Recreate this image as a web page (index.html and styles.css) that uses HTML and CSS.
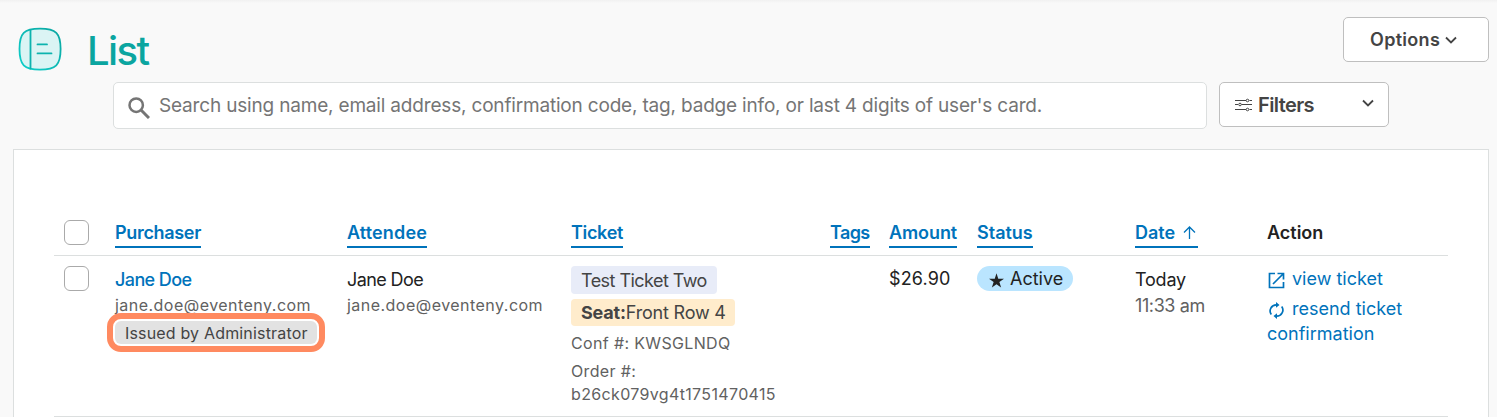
FILE: index.html
```html
<!DOCTYPE html>
<html lang="en">
<head>
    <meta charset="utf-8">
    <title>List</title>
    <link rel="stylesheet" href="styles.css">
</head>
<body>
    <header class="page-header">
        <svg class="page-icon" width="44" height="44" viewBox="0 0 44 44" fill="none" stroke-width="1.8" stroke-linecap="round">
            <defs>
                <linearGradient id="teal" x1="0" y1="1" x2="1" y2="0">
                    <stop offset="0" stop-color="#0fd0cb"/>
                    <stop offset="1" stop-color="#0ba5a0"/>
                </linearGradient>
            </defs>
            <path d="M22 1.700C38 1.700 42.600 6 42.600 22S38 42.600 22 42.600 1.500 38 1.500 22 6 1.700 22 1.700Z" fill="#dbf4f4" stroke="url(#teal)"/>
            <path d="M12.500 3v38.500" stroke="#0db3ae"/>
            <path d="M19.500 17.400h9.500M19.500 26.400h14" stroke="#0db3ae"/>
        </svg>
        <h1>List</h1>
        <button class="btn options">Options
            <svg width="12" height="8" viewBox="0 0 12 8"><path d="M1 1.500l5 5 5-5" fill="none" stroke="#444" stroke-width="1.800"/></svg>
        </button>
    </header>

    <div class="search-row">
        <div class="search-box">
            <svg width="22" height="22" viewBox="0 0 22 22" fill="none" stroke="#757575">
                <circle cx="8.200" cy="8.200" r="6.700" stroke-width="2.500"/>
                <path d="M13 13l8 8" stroke-width="3"/>
            </svg>
            <input type="text" placeholder="Search using name, email address, confirmation code, tag, badge info, or last 4 digits of user's card.">
        </div>
        <button class="btn filters">
            <svg width="17" height="14" viewBox="0 0 17 14" fill="none" stroke="#444">
                <path d="M0 2.500h11M14.500 2.500H17M0 6.500h3M6.500 6.500H17M0 11.500h11M14.500 11.500H17"/>
                <circle cx="12.500" cy="2.500" r="1.300"/>
                <circle cx="5" cy="6.500" r="1.300"/>
                <circle cx="12.500" cy="11.500" r="1.300"/>
            </svg>
            <span>Filters</span>
            <svg class="chevron" width="12" height="8" viewBox="0 0 12 8"><path d="M1 1.500l5 5 5-5" fill="none" stroke="#444" stroke-width="1.800"/></svg>
        </button>
    </div>

    <main class="card">
        <table>
            <colgroup>
                <col class="col-check">
                <col class="col-purchaser">
                <col class="col-attendee">
                <col class="col-ticket">
                <col class="col-tags">
                <col class="col-amount">
                <col class="col-status">
                <col class="col-date">
                <col class="col-action">
            </colgroup>
            <thead>
                <tr>
                    <th><input type="checkbox"></th>
                    <th><a class="sort purchaser">Purchaser</a></th>
                    <th><a class="sort attendee">Attendee</a></th>
                    <th><a class="sort ticket">Ticket</a></th>
                    <th><a class="sort tags">Tags</a></th>
                    <th><a class="sort amount">Amount</a></th>
                    <th><a class="sort status">Status</a></th>
                    <th><a class="sort date">Date
                        <svg width="13" height="13" viewBox="0 0 13 13"><path d="M6.500 13V1M1 6.500l5.500-5.500L12 6.500" fill="none" stroke="#0073bb" stroke-width="1.300"/></svg></a></th>
                    <th>Action</th>
                </tr>
            </thead>
            <tbody>
                <tr>
                    <td><input type="checkbox"></td>
                    <td>
                        <a class="name">Jane Doe</a>
                        <div class="email">jane.doe@eventeny.com</div>
                        <div class="issued">Issued by Administrator</div>
                    </td>
                    <td>
                        <div class="name">Jane Doe</div>
                        <div class="email">jane.doe@eventeny.com</div>
                    </td>
                    <td>
                        <div class="badge type">Test Ticket Two</div>
                        <div class="badge seat"><b>Seat:</b>Front Row 4</div>
                        <div class="code">Conf #: KWSGLNDQ</div>
                        <div class="code order">Order #:<br>b26ck079vg4t1751470415</div>
                    </td>
                    <td></td>
                    <td><div class="price">$26.90</div></td>
                    <td>
                        <div class="pill">
                            <svg width="15" height="15" viewBox="0 0 24 24"><path d="M12 0.500l2.800 8.600H24l-7.400 5.400 2.800 8.700L12 17.900l-7.400 5.300 2.800-8.700L0 9.100h9.200z" fill="#222"/></svg>
                            <span>Active</span>
                        </div>
                    </td>
                    <td>
                        <div class="name today">Today</div>
                        <div class="time">11:33 am</div>
                    </td>
                    <td>
                        <a class="link"><svg width="17" height="17" viewBox="0 0 17 17"><path d="M7 1.500H1.500v14h14V10M9.500 1.500h6v6M15.500 1.500L5 12" fill="none" stroke="#0073bb" stroke-width="1.700"/></svg>view ticket</a>
                        <a class="link resend"><svg width="17" height="17" viewBox="0 0 17 17"><path d="M3.300 12.600A6.200 6.200 0 0 1 8.500 2.800M13.700 4.400A6.200 6.200 0 0 1 8.500 14.200" fill="none" stroke="#0073bb" stroke-width="1.700"/><path d="M8 0l3.500 2.900L8 5.800zM9 11.200l-3.500 2.900L9 17z" fill="#0073bb"/></svg>resend ticket<br>confirmation</a>
                    </td>
                </tr>
            </tbody>
        </table>
    </main>
</body>
</html>
```
FILE: styles.css
```css
* {
    box-sizing: border-box;
}
body {
    margin: 0;
    background: linear-gradient(#f1f1f1, #f9f9f9 3px);
    font-family: Inter, "Liberation Sans", sans-serif;
    font-size: 18px;
    color: #222;
}
.page-header {
    display: flex;
    height: 82px;
    padding: 17px 8px 0 18px;
}
.page-icon {
    margin-top: 10px;
}
h1 {
    margin: 10px 0 0 25px;
    font-size: 40px;
    line-height: 48px;
    font-weight: 500;
    letter-spacing: -1.6px;
    color: #0ba5a0;
}
.btn {
    display: flex;
    align-items: center;
    height: 45px;
    border: 1px solid #bfbfbf;
    border-radius: 5px;
    background: #fff;
    font-family: inherit;
    font-weight: 600;
    color: #444;
}
.options {
    width: 146px;
    margin-left: auto;
    padding: 0 0 0 26px;
    font-size: 18px;
    letter-spacing: 0.3px;
    gap: 5px;
}
.search-row {
    display: flex;
    height: 67px;
    padding-left: 113px;
}
.search-box {
    display: flex;
    align-items: center;
    width: 1094px;
    height: 47px;
    padding: 0 14px;
    border: 1px solid #dcdfdf;
    border-radius: 5px;
    background: #fff;
}
.search-box svg {
    margin-top: 5px;
}
.search-box input {
    flex: 1;
    margin-left: 9px;
    padding: 0;
    border: 0;
    outline: 0;
    font-family: inherit;
    font-size: 19px;
    letter-spacing: -0.18px;
}
.search-box input::placeholder {
    color: #757575;
}
.filters {
    width: 170px;
    margin-left: 12px;
    padding: 0 14px 0 15px;
    font-size: 20px;
    letter-spacing: -0.6px;
}
.filters span {
    margin-left: 6px;
}
.chevron {
    margin: -3px 0 0 auto;
}
.card {
    width: 1476px;
    height: 268px;
    margin-left: 13px;
    padding: 70px 40px 0;
    border: 1px solid #dcdfdf;
    border-bottom: 0;
    background: #fff;
}
table {
    width: 1394px;
    table-layout: fixed;
    border-collapse: separate;
    border-spacing: 0;
}
.col-check { width: 51px; }
.col-purchaser { width: 232px; }
.col-attendee { width: 224px; }
.col-ticket { width: 259px; }
.col-tags { width: 59px; }
.col-amount { width: 88px; }
.col-status { width: 158px; }
.col-date { width: 132px; }
.col-action { width: 191px; }
th, td {
    padding: 0 0 0 10px;
    border-bottom: 1px solid #dcdfdf;
    text-align: left;
    vertical-align: top;
    white-space: nowrap;
}
th {
    height: 36px;
    font-weight: 600;
    line-height: 26px;
}
td {
    height: 161px;
    padding-top: 10px;
}
input[type="checkbox"] {
    display: block;
    appearance: none;
    width: 25px;
    height: 25px;
    margin: 0;
    border: 1px solid #aaa;
    border-radius: 6px;
    background: #fff;
}
.sort {
    display: inline-block;
    height: 28px;
    border-bottom: 2px solid #0073bb;
    color: #0073bb;
}
.purchaser, .ticket { letter-spacing: -0.32px; }
.attendee { letter-spacing: 0.15px; }
.tags { letter-spacing: -0.6px; }
.amount { letter-spacing: -0.1px; }
.date svg {
    margin: 0 2px 0 3px;
}
.name {
    display: block;
    height: 27px;
    line-height: 28px;
    letter-spacing: -0.6px;
}
a.name {
    font-weight: 500;
    color: #0073bb;
}
.today {
    letter-spacing: -0.2px;
}
.email {
    height: 28px;
    font-size: 16px;
    line-height: 25px;
    letter-spacing: 0.47px;
    color: #616161;
}
.issued {
    width: 202px;
    height: 23px;
    padding-left: 10px;
    border-radius: 6px;
    background: #e2e2e2;
    outline: 6px solid #ff8a60;
    outline-offset: 2px;
    font-size: 16px;
    line-height: 24px;
    letter-spacing: 0.17px;
    color: #444;
}
.badge {
    width: 146px;
    height: 28px;
    margin-bottom: 5px;
    padding-left: 10px;
    border-radius: 4px;
    background: #e8ecf8;
    line-height: 30px;
    letter-spacing: -0.55px;
    color: #444;
}
.seat {
    width: 164px;
    height: 27px;
    background: #ffeccc;
    line-height: 27px;
    letter-spacing: -0.2px;
}
.code {
    position: relative;
    top: 1px;
    font-size: 16px;
    line-height: 23px;
    letter-spacing: 0.35px;
    color: #616161;
}
.order {
    margin-top: 5px;
}
.price {
    line-height: 25px;
    letter-spacing: 0.15px;
}
.pill {
    display: flex;
    align-items: center;
    width: 96px;
    height: 25px;
    padding-left: 12px;
    border-radius: 13px;
    background: #bae5ff;
}
.pill svg {
    margin-top: 4px;
}
.pill span {
    margin-left: 6px;
}
.time {
    line-height: 25px;
    letter-spacing: -0.4px;
    color: #616161;
}
.link {
    display: block;
    line-height: 25px;
    color: #0073bb;
}
.link svg {
    margin: 0 7px 0 1px;
    vertical-align: -4px;
}
.resend {
    margin-top: 5px;
}
```
